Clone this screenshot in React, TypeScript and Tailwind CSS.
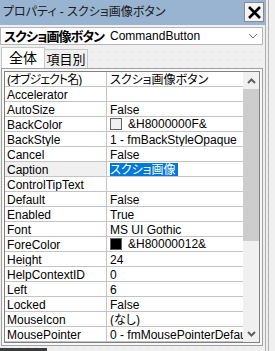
import React from "react";

type Row = { label: React.ReactNode; key: string; value?: React.ReactNode };

const rows: Row[] = [
  {
    key: "obj",
    label: <span className="tracking-[-1px]">(オブジェクト名)</span>,
    value: <span>スクショ画像ボタン</span>,
  },
  { key: "Accelerator", label: "Accelerator", value: "" },
  { key: "AutoSize", label: "AutoSize", value: "False" },
  {
    key: "BackColor",
    label: "BackColor",
    value: (
      <span className="flex items-center -mt-[2px]">
        <span className="inline-block w-[12px] h-[12px] bg-[#f0f0f0] border border-[#606060] mr-[6px]" />
        <span className="mt-[1px]">&amp;H8000000F&amp;</span>
      </span>
    ),
  },
  { key: "BackStyle", label: "BackStyle", value: "1 - fmBackStyleOpaque" },
  { key: "Cancel", label: "Cancel", value: "False" },
  {
    key: "Caption",
    label: "Caption",
    value: <span className="bg-[#0078d7] text-white pr-[2px] pb-[1px]">スクショ画像</span>,
  },
  { key: "ControlTipText", label: "ControlTipText", value: "" },
  { key: "Default", label: "Default", value: "False" },
  { key: "Enabled", label: "Enabled", value: "True" },
  { key: "Font", label: "Font", value: "MS UI Gothic" },
  {
    key: "ForeColor",
    label: "ForeColor",
    value: (
      <span className="flex items-center -mt-[2px]">
        <span className="inline-block w-[12px] h-[12px] bg-black border border-[#606060] mr-[6px]" />
        <span className="mt-[1px]">&amp;H80000012&amp;</span>
      </span>
    ),
  },
  { key: "Height", label: "Height", value: "24" },
  { key: "HelpContextID", label: "HelpContextID", value: "0" },
  { key: "Left", label: "Left", value: "6" },
  { key: "Locked", label: "Locked", value: "False" },
  { key: "MouseIcon", label: "MouseIcon", value: <span>(なし)</span> },
  { key: "MousePointer", label: "MousePointer", value: "0 - fmMousePointerDefau" },
];

const dots =
  "bg-[#f0f0f0] bg-[radial-gradient(#dcdcdc_0.6px,transparent_0.8px)] bg-[length:8px_8px]";

export default function App() {
  return (
    <div
      className={`w-[275px] h-[351px] overflow-hidden flex text-black ${dots} [font-family:'Liberation_Sans','Noto_Sans_CJK_JP',sans-serif] [font-feature-settings:'palt']`}
    >
      <div className="w-[265px] flex flex-col shrink-0">
        {/* Title bar */}
        <div className="h-[25px] bg-[#99b4d1] flex items-center justify-between pl-[3px] pr-[1px]">
          <span className="text-[12px] text-[#1a1a1a] leading-none">プロパティ - スクショ画像ボタン</span>
          <div className="w-[20px] h-[20px] bg-[#f4f4f4] border border-[#8a8a8a] flex items-center justify-center">
            <svg width="15" height="15" viewBox="0 0 15 15">
              <path d="M2 2 L13 13 M13 2 L2 13" stroke="#000" strokeWidth="2.6" />
            </svg>
          </div>
        </div>
        {/* Object selector */}
        <div className="mt-[2px] w-[263px] h-[19px] bg-white border border-[#b5b5b5] flex items-center pl-[3px] pr-[4px]">
          <span className="text-[13px] font-bold leading-none tracking-[-1px]">スクショ画像ボタン</span>
          <span className="text-[12px] leading-none ml-[6px]">CommandButton</span>
          <svg className="ml-auto" width="10" height="6" viewBox="0 0 10 6">
            <path d="M1 1 L5 5 L9 1" fill="none" stroke="#707070" strokeWidth="1" />
          </svg>
        </div>
        {/* Tabs */}
        <div className="h-[23px] flex items-end pl-[1px]">
          <div className="h-[21px] w-[44px] bg-white border border-b-0 border-[#c8c8c8] flex items-center justify-center text-[14px] leading-none">
            全体
          </div>
          <div className="h-[19px] w-[43px] bg-[#f0f0f0] border border-l-0 border-b-0 border-[#c8c8c8] flex items-center justify-center text-[13px] leading-none">
            項目別
          </div>
        </div>
        {/* Grid */}
        <div className="ml-[1px] w-[262px] border border-[#a0a0a0] p-[2px] bg-[#f8f8f8]">
          <div className="border border-[#808080] flex bg-white">
            <div className="w-[238px] flex flex-col">
              {rows.map((r) => (
                <div key={r.key} className="h-[15px] flex border-b border-[#c4c4c4] text-[12px] leading-[12px]">
                  <div
                    className={`w-[102px] shrink-0 border-r border-[#c4c4c4] pl-[2px] pt-[2px] whitespace-nowrap overflow-hidden ${
                      r.key === "Caption" ? "bg-[#f0f0f0]" : ""
                    }`}
                  >
                    {r.label}
                  </div>
                  <div className="flex-1 pl-[3px] pt-[2px] whitespace-nowrap overflow-hidden">{r.value}</div>
                </div>
              ))}
            </div>
            <div className="w-[16px] bg-[#f0f0f0] flex flex-col items-center">
              <div className="h-[17px] flex items-center justify-center">
                <svg width="9" height="6" viewBox="0 0 9 6">
                  <path d="M1 5 L4.5 1.5 L8 5" fill="none" stroke="#606060" strokeWidth="2" />
                </svg>
              </div>
              <div className="w-[16px] h-[152px] bg-[#cdcdcd]" />
              <div className="flex-1" />
              <div className="h-[17px] flex items-center justify-center">
                <svg width="9" height="6" viewBox="0 0 9 6">
                  <path d="M1 1 L4.5 4.5 L8 1" fill="none" stroke="#606060" strokeWidth="2" />
                </svg>
              </div>
            </div>
          </div>
        </div>
        <div className="mt-[2px] w-[47px] h-[3px] bg-[#3c3c3c]" />
      </div>
      <div className="flex-1 flex">
        <div className="w-[1px] h-full bg-[#b0b0b0]" />
        <div className="w-[2px]" />
        <div className="w-[1px] h-full bg-[#b0b0b0]" />
      </div>
    </div>
  );
}
